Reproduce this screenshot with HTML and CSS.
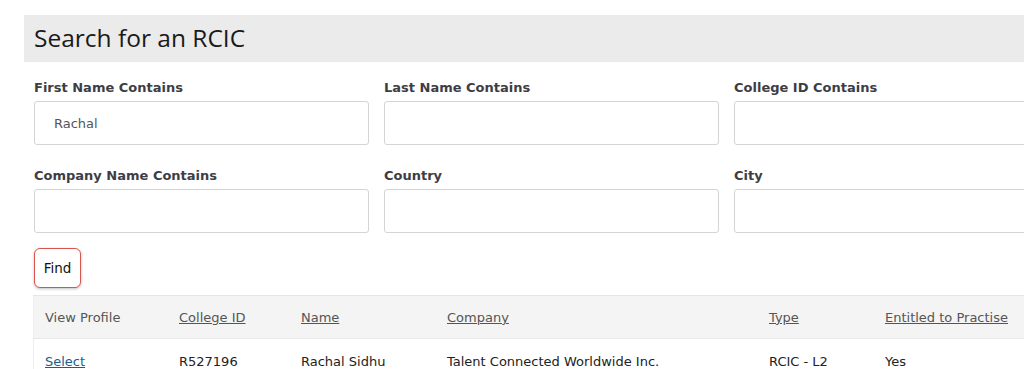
FILE: index.html
```html
<!DOCTYPE html>
<html lang="en">
<head>
<meta charset="utf-8">
<title>Search for an RCIC</title>
<link rel="stylesheet" href="styles.css">
</head>
<body>
<div class="page">
  <h1 class="title">Search for an RCIC</h1>
  <form class="search">
    <div class="grid">
      <div class="field"><label>First Name Contains</label><input type="text" value="Rachal"></div>
      <div class="field"><label>Last Name Contains</label><input type="text"></div>
      <div class="field"><label>College ID Contains</label><input type="text"></div>
      <div class="field"><label>Company Name Contains</label><input type="text"></div>
      <div class="field"><label>Country</label><input type="text"></div>
      <div class="field"><label>City</label><input type="text"></div>
    </div>
    <div class="actions"><button type="button" class="find">Find</button></div>
  </form>
  <table class="results">
    <thead>
      <tr>
        <th class="c1">View Profile</th>
        <th class="c2"><a href="#">College ID</a></th>
        <th class="c3"><a href="#">Name</a></th>
        <th class="c4"><a href="#">Company</a></th>
        <th class="c5"><a href="#">Type</a></th>
        <th class="c6"><a href="#">Entitled to Practise</a></th>
      </tr>
    </thead>
    <tbody>
      <tr>
        <td><a href="#" class="select">Select</a></td>
        <td>R527196</td>
        <td>Rachal Sidhu</td>
        <td>Talent Connected Worldwide Inc.</td>
        <td>RCIC - L2</td>
        <td>Yes</td>
      </tr>
    </tbody>
  </table>
</div>
</body>
</html>
```
FILE: styles.css
```css
html, body {
  margin: 0;
  padding: 0;
  background: #fff;
  overflow: hidden;
}
body {
  font-family: "DejaVu Sans", Verdana, sans-serif;
  font-size: 13px;
  color: #222;
}
.page {
  width: 1100px;
  padding: 15px 0 0 24px;
}
.title {
  margin: 0;
  height: 47px;
  background: #ebebeb;
  padding: 0 10px;
  font-family: "Open Sans", sans-serif;
  font-weight: 400;
  font-size: 24.5px;
  line-height: 46px;
  color: #1a1a1a;
}
.search {
  padding: 17px 0 0 10px;
}
.grid {
  display: grid;
  grid-template-columns: 335px 335px 335px;
  column-gap: 15px;
  row-gap: 22px;
}
.field label {
  display: block;
  font-weight: bold;
  font-size: 13px;
  color: #3d3d45;
  height: 18px;
  line-height: 18px;
  margin-bottom: 4px;
}
.field input {
  display: block;
  box-sizing: border-box;
  width: 100%;
  height: 44px;
  border: 1px solid #d4d4d4;
  border-radius: 3px;
  padding: 0 19px;
  font-family: "DejaVu Sans", Verdana, sans-serif;
  font-size: 13px;
  color: #555;
  background: #fff;
}
.actions {
  padding-top: 15px;
}
.find {
  box-sizing: border-box;
  width: 47px;
  height: 40px;
  border: 1px solid #d9534f;
  border-radius: 6px;
  background: #fff;
  box-shadow: 0 1px 3px rgba(0,0,0,0.25);
  font-family: "DejaVu Sans", Verdana, sans-serif;
  font-size: 13.5px;
  color: #111;
  padding: 0;
}
.results {
  margin: 7px 0 0 9px;
  border-collapse: collapse;
  width: 1060px;
  border-top: 1px solid #e6e6e6;
  border-left: 1px solid #eee;
}
.results th {
  background: #f4f4f4;
  height: 42px;
  text-align: left;
  font-weight: normal;
  color: #555;
  padding: 0 0 0 11px;
  border-bottom: 1px solid #e8e8e8;
}
.results th a {
  color: #555;
  text-decoration: underline;
}
.results td {
  height: 44px;
  padding: 0 0 0 11px;
  color: #222;
}
.c1 { width: 123px; }
.c2 { width: 111px; }
.c3 { width: 135px; }
.c4 { width: 311px; }
.c5 { width: 105px; }
.select {
  color: #1b5d91;
  text-decoration: underline;
}
```
